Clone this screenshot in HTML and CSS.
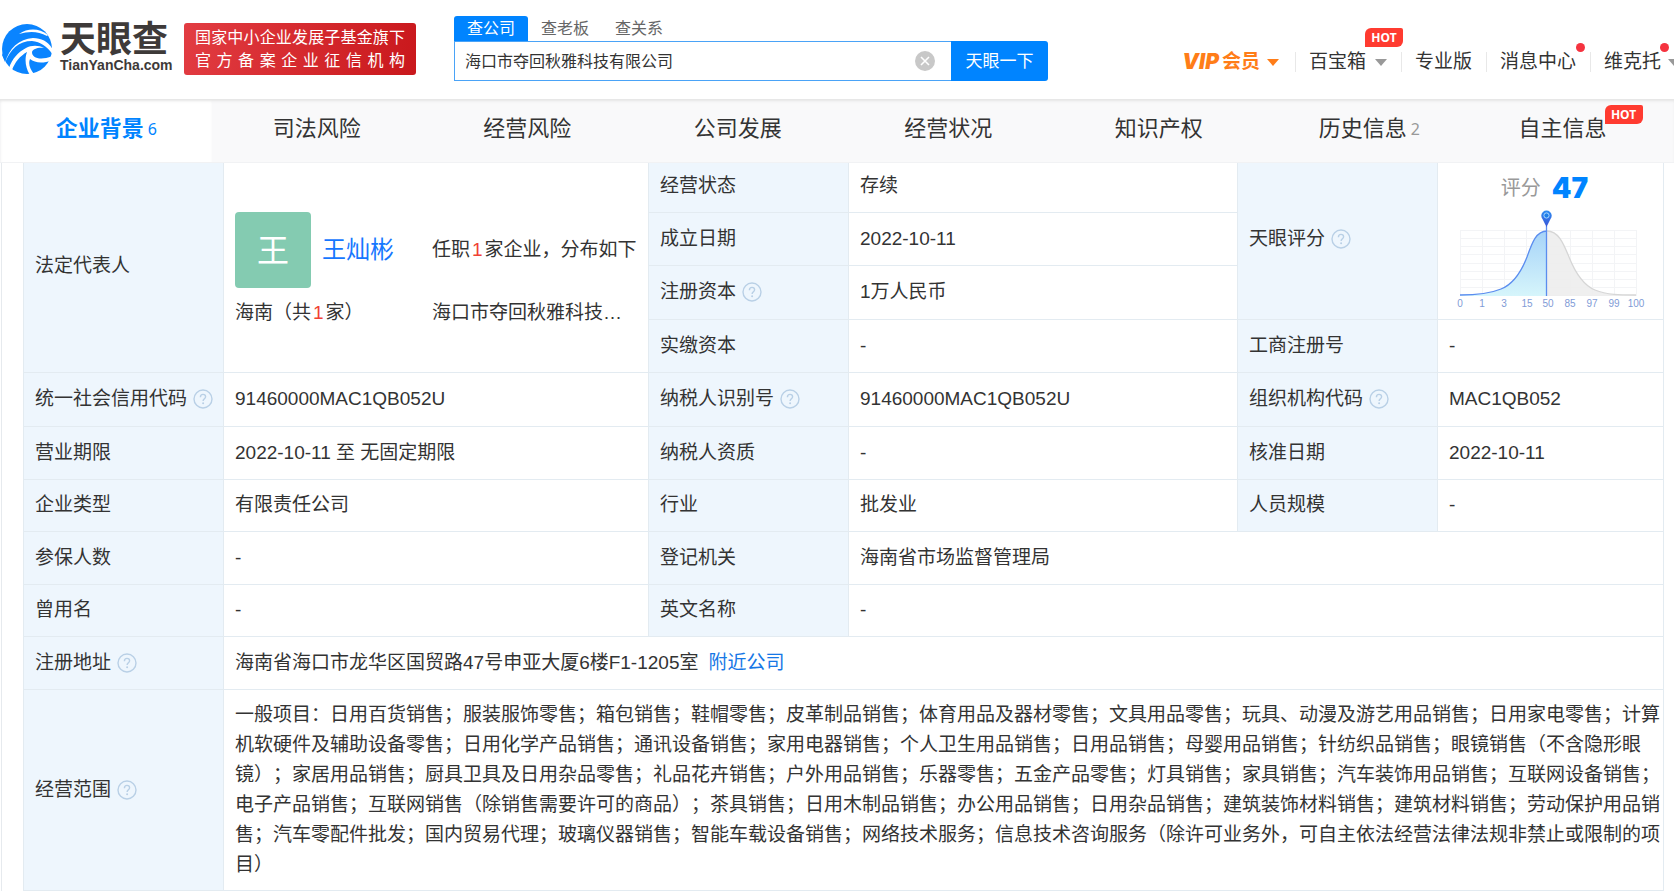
FILE: index.html
```html
<!DOCTYPE html>
<html lang="zh-CN">
<head>
<meta charset="utf-8">
<title>海口市夺回秋雅科技有限公司 - 天眼查</title>
<link rel="stylesheet" href="styles.css">
</head>
<body>
<svg class="defs" aria-hidden="true">
  <symbol id="help" viewBox="0 0 20 20">
    <circle cx="10" cy="10" r="9" fill="none" stroke="currentColor" stroke-width="1.4"/>
    <path d="M7.4 8.2C7.4 6.4 8.5 5.4 10 5.4s2.6 1 2.6 2.4c0 1.900-2.500 2-2.500 4.200" fill="none" stroke="currentColor" stroke-width="1.4"/>
    <circle cx="10.100" cy="14.200" r="1" fill="currentColor"/>
  </symbol>
</svg>
<header class="header">
  <a class="logo" href="#">
    <svg class="logo-mark" viewBox="0 0 50 50" aria-hidden="true">
      <circle cx="25" cy="25" r="25" fill="#0a84ff"/>
      <path d="M17 10C26 4 37 4 46 11L45 12C36 7 27 7 17 10Z" fill="#fff"/>
      <path d="M0 31C6 19 18 12 30 13C40 14 47 19 51 28C44 21 37 18 29 18C16 17 7 25 3 38Z" fill="#0a84ff"/>
      <path d="M3 39C7 24 17 15 31 14C40 14 47 18 51 26L51 31C46 23 39 18 30 17C17 17 8 25 3 39Z" fill="#fff"/>
      <path d="M24 24C29 21 37 21 42 24C36 23 31 25 30 28C30 34 38 37 51 32L50 36C41 40 33 39 28 35C26 40 28 45 32 50L28 51C24 45 22 36 25 28C18 32 13 38 10 46L7 44C10 35 16 28 24 24Z" fill="#fff"/>
    </svg>
    <span class="logo-words"><span class="logo-name">天眼查</span><span class="logo-domain">TianYanCha.com</span></span>
  </a>
  <div class="slogan"><span>国家中小企业发展子基金旗下</span><span>官方备案企业征信机构</span></div>
  <form class="search">
    <div class="search-tabs">
      <button type="button" class="search-tab is-active">查公司</button>
      <button type="button" class="search-tab">查老板</button>
      <button type="button" class="search-tab">查关系</button>
    </div>
    <div class="search-row">
      <div class="search-box">
        <input class="search-input" type="text" aria-label="查公司" value="海口市夺回秋雅科技有限公司">
        <button type="button" class="clear" aria-label="清空"><svg viewBox="0 0 20 20"><circle cx="10" cy="10" r="10" fill="#c8c8c8"/><path d="M6 6L14 14M14 6L6 14" stroke="#fff" stroke-width="1.600"/></svg></button>
      </div>
      <button type="submit" class="search-submit">天眼一下</button>
    </div>
  </form>
  <nav class="links">
    <a class="link vip" href="#"><span class="vip-word">VIP</span>会员<i class="caret"></i></a>
    <a class="link" href="#">百宝箱<i class="caret caret-wide"></i><span class="hot">HOT</span></a>
    <a class="link" href="#">专业版</a>
    <a class="link" href="#">消息中心<i class="dot"></i></a>
    <a class="link user" href="#">维克托<i class="caret"></i><i class="dot"></i></a>
  </nav>
</header>
<nav class="tabs">
  <a class="tab is-active" href="#">企业背景<span class="count">6</span></a>
  <a class="tab" href="#">司法风险</a>
  <a class="tab" href="#">经营风险</a>
  <a class="tab" href="#">公司发展</a>
  <a class="tab" href="#">经营状况</a>
  <a class="tab" href="#">知识产权</a>
  <a class="tab" href="#">历史信息<span class="count">2</span></a>
  <a class="tab tab-last" href="#"><span class="hot-anchor">自主信息<span class="hot">HOT</span></span></a>
</nav>
<main class="panel">
  <table class="info">
    <colgroup><col class="c-label"><col class="c-first"><col class="c-label"><col><col class="c-label"><col class="c-last"></colgroup>
    <tbody>
    <tr class="row-top">
      <th rowspan="4" scope="row">法定代表人</th>
      <td rowspan="4">
        <div class="rep">
          <div class="person"><span class="avatar">王</span><a class="name" href="#">王灿彬</a></div>
          <div class="nowrap">任职<em>1</em>家企业，分布如下</div>
          <div class="nowrap">海南（共<em>1</em>家）</div>
          <div class="nowrap">海口市夺回秋雅科技…</div>
        </div>
      </td>
      <th scope="row">经营状态</th><td>存续</td>
      <th rowspan="3" scope="row">天眼评分<svg class="help"><use href="#help"/></svg></th>
      <td rowspan="3" class="score-cell">
        <div class="score">评分<strong>47</strong></div>
        <svg class="chart" viewBox="0 0 192 100">
          <defs>
            <linearGradient id="fill" x1="0" y1="0" x2="0" y2="1"><stop offset="0" stop-color="#a6d3f8"/><stop offset="1" stop-color="#d6f5fb"/></linearGradient>
            <linearGradient id="pin" x1="0" y1="0" x2="0" y2="1"><stop offset="0" stop-color="#2f8df0"/><stop offset="1" stop-color="#3a55d8"/></linearGradient>
          </defs>
          <path d="M5 21.500H181M5 29.500H181M5 37.500H181M5 45.500H181M5 54.500H181M5 62.500H181M5 70.500H181M5 78.500H181M5 86.500H181M5.500 21V87M27.500 21V87M49.500 21V87M71.500 21V87M93.500 21V87M115.500 21V87M137.500 21V87M159.500 21V87M181.500 21V87" stroke="#f3f4f6" fill="none"/>
          <path d="M92 22C104 22 109 36 114 48C122 68 130 77 140 81C152 86 165 86 181 86L181 87H92Z" fill="#ececec" fill-opacity=".85"/>
          <path d="M92 22C104 22 109 36 114 48C122 68 130 77 140 81C152 86 165 86 181 86" fill="none" stroke="#d6d6d6" stroke-width="1.300"/>
          <path d="M5 86C20 86 34 85 46 80C56 76 65 66 72 48C77 34 81 22 92 22V87H5Z" fill="url(#fill)"/>
          <path d="M5 86C20 86 34 85 46 80C56 76 65 66 72 48C77 34 81 22 92 22M91.500 17V87" fill="none" stroke="#5b8def" stroke-width="1.300"/>
          <path d="M91.500 18L87.500 10A5.200 5.200 0 1 1 95.500 10Z" fill="url(#pin)"/>
          <circle cx="91.500" cy="6.500" r="2.600" fill="#1f7fe8" stroke="#a8d8ff"/>
          <g class="axis"><text x="5" y="98">0</text><text x="27" y="98">1</text><text x="49" y="98">3</text><text x="72" y="98">15</text><text x="93" y="98">50</text><text x="115" y="98">85</text><text x="137" y="98">97</text><text x="159" y="98">99</text><text x="181" y="98">100</text></g>
        </svg>
      </td>
    </tr>
    <tr><th scope="row">成立日期</th><td>2022-10-11</td></tr>
    <tr class="row-tall"><th scope="row">注册资本<svg class="help"><use href="#help"/></svg></th><td>1万人民币</td></tr>
    <tr><th scope="row">实缴资本</th><td>-</td><th scope="row">工商注册号</th><td>-</td></tr>
    <tr class="row-tall"><th scope="row">统一社会信用代码<svg class="help"><use href="#help"/></svg></th><td>91460000MAC1QB052U</td><th scope="row">纳税人识别号<svg class="help"><use href="#help"/></svg></th><td>91460000MAC1QB052U</td><th scope="row">组织机构代码<svg class="help"><use href="#help"/></svg></th><td>MAC1QB052</td></tr>
    <tr><th scope="row">营业期限</th><td>2022-10-11 至 无固定期限</td><th scope="row">纳税人资质</th><td>-</td><th scope="row">核准日期</th><td>2022-10-11</td></tr>
    <tr class="row-short"><th scope="row">企业类型</th><td>有限责任公司</td><th scope="row">行业</th><td>批发业</td><th scope="row">人员规模</th><td>-</td></tr>
    <tr><th scope="row">参保人数</th><td>-</td><th scope="row">登记机关</th><td colspan="3">海南省市场监督管理局</td></tr>
    <tr class="row-short"><th scope="row">曾用名</th><td>-</td><th scope="row">英文名称</th><td colspan="3">-</td></tr>
    <tr><th scope="row">注册地址<svg class="help"><use href="#help"/></svg></th><td colspan="5">海南省海口市龙华区国贸路47号申亚大厦6楼F1-1205室<a class="near" href="#">附近公司</a></td></tr>
    <tr><th scope="row">经营范围<svg class="help"><use href="#help"/></svg></th><td colspan="5" class="scope">一般项目：日用百货销售；服装服饰零售；箱包销售；鞋帽零售；皮革制品销售；体育用品及器材零售；文具用品零售；玩具、动漫及游艺用品销售；日用家电零售；计算机软硬件及辅助设备零售；日用化学产品销售；通讯设备销售；家用电器销售；个人卫生用品销售；日用品销售；母婴用品销售；针纺织品销售；眼镜销售（不含隐形眼镜）；家居用品销售；厨具卫具及日用杂品零售；礼品花卉销售；户外用品销售；乐器零售；五金产品零售；灯具销售；家具销售；汽车装饰用品销售；互联网设备销售；电子产品销售；互联网销售（除销售需要许可的商品）；茶具销售；日用木制品销售；办公用品销售；日用杂品销售；建筑装饰材料销售；建筑材料销售；劳动保护用品销售；汽车零配件批发；国内贸易代理；玻璃仪器销售；智能车载设备销售；网络技术服务；信息技术咨询服务（除许可业务外，可自主依法经营法律法规非禁止或限制的项目）</td></tr>
    </tbody>
  </table>
</main>
</body>
</html>
```
FILE: styles.css
```css
* { box-sizing: border-box; }
body {
  margin: 0;
  overflow-x: hidden;
  background: #fff;
  color: #333;
  font: 19px/30px "Liberation Sans", "Noto Sans CJK SC", sans-serif;
  text-spacing-trim: space-all;
}
a { color: inherit; text-decoration: none; }
button, input { margin: 0; padding: 0; border: 0; background: none; color: inherit; font: inherit; }
button { cursor: pointer; }
.defs { display: none; }

.header { display: flex; align-items: flex-start; height: 99px; }
.logo { display: flex; gap: 8px; padding: 24px 0 0 2px; color: #3e3a39; }
.logo-mark { width: 50px; height: 50px; }
.logo-words { display: flex; flex-direction: column; gap: 1px; width: 124px; }
.logo-name { font-size: 36px; line-height: 32px; font-weight: 700; }
.logo-domain { font-size: 14px; line-height: 16px; font-weight: 700; }
.slogan {
  display: flex; flex-direction: column;
  width: 232px; margin-top: 23px; padding: 3px 11px;
  border-radius: 3px;
  background: linear-gradient(100deg, #e23c42, #c9181c);
  color: #fff; font-size: 16px; line-height: 23px; text-align-last: justify;
}
.search { width: 594px; margin: 16px 0 0 38px; font-size: 16px; }
.search-tabs { display: flex; }
.search-tab { width: 74px; height: 25px; color: #666; line-height: 25px; }
.search-tab.is-active { background: #0084ff; color: #fff; border-radius: 3px 3px 0 0; }
.search-row { display: flex; }
.search-box {
  display: flex; align-items: center; flex: 1;
  height: 40px; padding: 0 16px 0 10px;
  border: 1px solid #4aa3f7; border-right: 0;
}
.search-input { flex: 1; min-width: 0; padding-top: 2px; outline: 0; }
.clear { display: flex; }
.clear svg { width: 20px; height: 20px; }
.search-submit { width: 97px; height: 40px; padding-top: 2px; background: #0084ff; color: #fff; font-size: 17px; border-radius: 0 3px 3px 0; }

.links { display: flex; margin: 47px -6px 0 auto; white-space: nowrap; }
.link { position: relative; display: flex; align-items: center; padding: 0 14px; }
.link + .link::before {
  content: ""; position: absolute; left: 0; top: 5px;
  width: 1px; height: 20px; background: #e8e8e8;
}
.link:last-child { padding-right: 0; }
.vip { padding-right: 16px; color: #ff7d18; font-weight: 700; }
.vip-word { font: italic 900 21px/30px Inter, sans-serif; margin-right: 3px; }
.caret { margin-left: 7px; border: solid transparent; border-width: 7px 6px 0; border-top-color: #999; }
.vip .caret { border-top-color: #ff7d18; }
.caret-wide { margin-left: 9px; }
.dot { position: absolute; top: -4px; right: 5px; width: 9px; height: 9px; border-radius: 50%; background: #f5333f; }
.user .dot { right: 11px; }
.hot {
  position: absolute; top: -19px; right: -2px;
  width: 38px; height: 19px;
  border-radius: 6px 2px 6px 0;
  background: #ff3b30; color: #fff;
  font: 700 12px/19px "Noto Sans", sans-serif; text-align: center;
}

.tabs {
  display: grid; grid-template-columns: repeat(7, 210fr) 199fr;
  height: 64px; padding-left: 1px;
  border-bottom: 1px solid #f1f2f4;
  background: #f9f9fa;
  box-shadow: inset 0 3px 3px -1px #e4e4e4;
  font-size: 22px;
}
.tab { display: flex; align-items: center; justify-content: center; padding-bottom: 3px; }
.tab.is-active { background: #fff; color: #0084ff; font-weight: 700; box-shadow: inset 0 3px 3px -1px #e4e4e4; }
.count { margin-left: 4px; color: #999; font: 400 16px/30px "Noto Sans", sans-serif; }
.is-active .count { color: #0084ff; }
.tab-last { justify-content: flex-start; padding-left: 44px; }
.hot-anchor { position: relative; }
.hot-anchor .hot { top: -9px; right: -36px; }

.panel { margin-left: 1px; padding: 0 10px 0 21px; border-left: 1px solid #e6eaee; }
.info { width: 100%; table-layout: fixed; border-collapse: collapse; }
.c-label { width: 200px; }
.c-first { width: 425px; }
.c-last { width: 226px; }
th, td {
  height: 53px; padding: 0 2px 0 11px;
  border: 1px solid #e3ebf1;
  text-align: left; font-weight: 400;
}
tr:first-child > * { border-top: 0; }
th { background: #eef6fd; }
.row-top > th, .row-top > td { height: 49px; padding-bottom: 3px; }
.row-tall > * { height: 54px; }
.row-short > * { height: 52px; }
.help { width: 20px; height: 20px; margin-left: 6px; vertical-align: -4px; color: #b9d0e6; }
.rep { display: grid; grid-template-columns: 197px 1fr; row-gap: 10px; align-items: center; padding-top: 8px; }
.person { display: flex; align-items: center; gap: 11px; }
.avatar {
  width: 76px; height: 76px; border-radius: 4px;
  background: #84cbb1; color: #fff;
  font-size: 32px; line-height: 78px; text-align: center;
}
.name { color: #1677ff; font-size: 24px; }
.nowrap { white-space: nowrap; }
em { margin: 0 2px; color: #f04134; font-style: normal; }
.near { margin-left: 10px; color: #1677e6; }
.info .scope { padding: 10px 2px 10px 11px; }
.info .score-cell { padding: 0; text-align: center; }
.score { display: flex; justify-content: center; align-items: center; gap: 11px; padding-right: 12px; color: #999; font-size: 20px; }
.score strong { color: #0084ff; font: 900 28px/30px Inter, sans-serif; }
.chart { display: block; width: 192px; height: 100px; margin: 6px auto 0; }
.axis { fill: #7f9bd6; font-size: 10px; text-anchor: middle; }
```
